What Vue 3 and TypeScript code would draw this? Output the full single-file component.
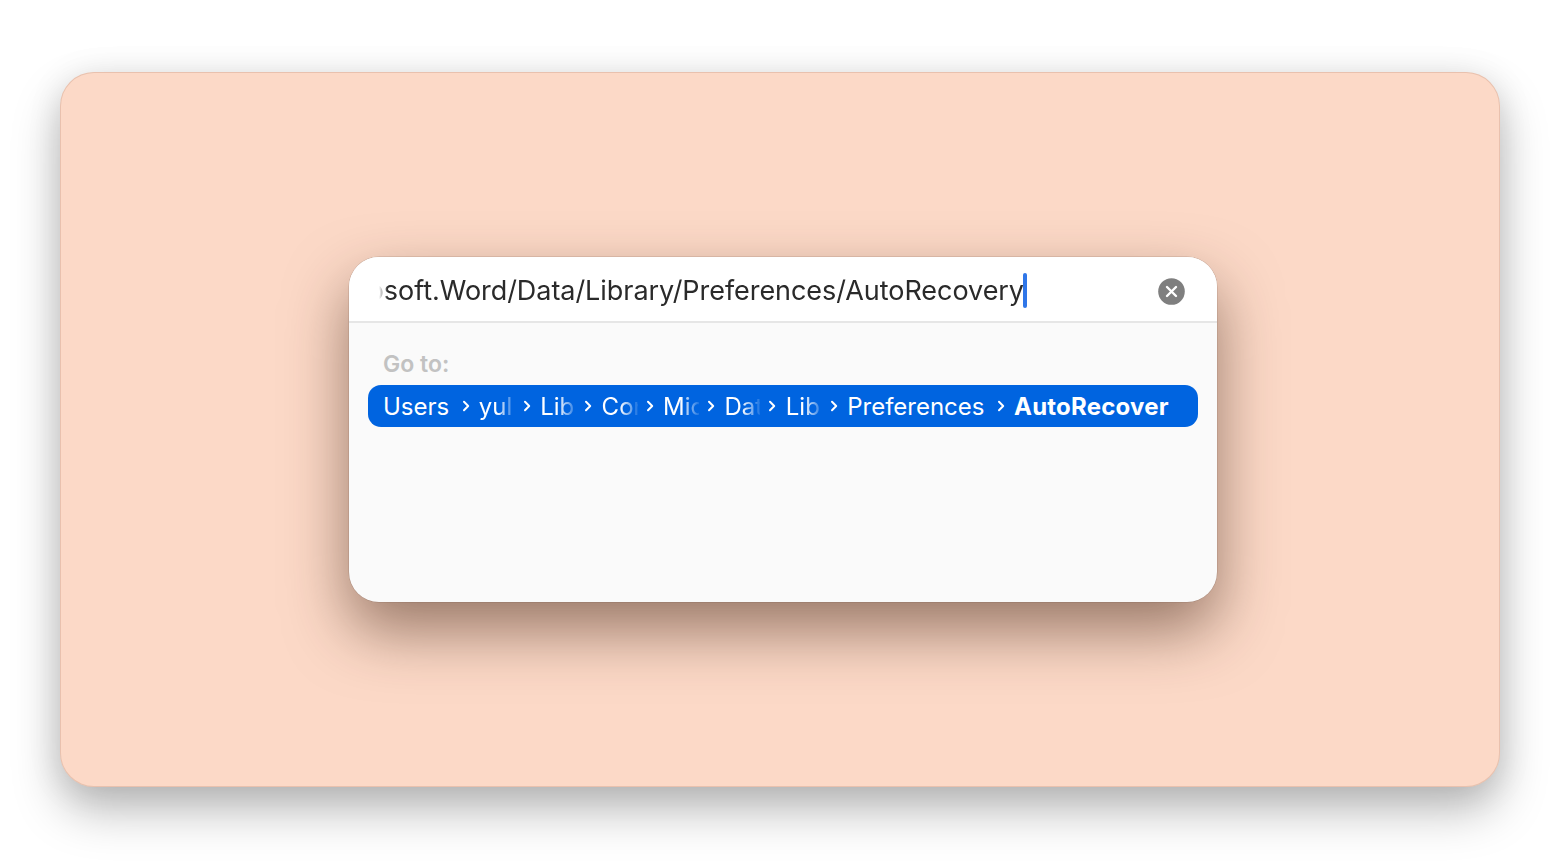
<script setup lang="ts">
interface Crumb { label: string; kind: 'full' | 'fade' | 'last' }
const crumbs: Crumb[] = [
  { label: 'Users', kind: 'full' },
  { label: 'yul', kind: 'fade' },
  { label: 'Lib', kind: 'fade' },
  { label: 'Con', kind: 'fade' },
  { label: 'Mic', kind: 'fade' },
  { label: 'Dat', kind: 'fade' },
  { label: 'Lib', kind: 'fade' },
  { label: 'Preferences', kind: 'full' },
  { label: 'AutoRecover', kind: 'last' },
]
</script>

<template>
  <main class="page">
    <section class="card">
      <div class="dialog">
        <header class="head">
          <div class="field">
            <span class="path">Microsoft.Word/Data/Library/Preferences/AutoRecovery</span>
          </div>
          <i class="caret"></i>
          <button class="clear" type="button" aria-label="Clear">
            <svg viewBox="0 0 27 27" width="27" height="27">
              <circle cx="13.5" cy="13.5" r="13.3" fill="#7f7f7f" />
              <path d="M9 9 18 18M18 9 9 18" stroke="#fff" stroke-width="2.4" stroke-linecap="round" fill="none" />
            </svg>
          </button>
        </header>
        <div class="body">
          <div class="goto">Go to:</div>
          <div class="row">
            <template v-for="(c, i) in crumbs" :key="i">
              <span class="crumb" :class="c.kind">{{ c.label }}</span>
              <svg v-if="i < crumbs.length - 1" class="chev" :class="{ wide: c.kind === 'full' }" viewBox="0 0 8 12" width="8" height="12">
                <path d="M2 1.8 6.2 6 2 10.2" stroke="#fff" stroke-width="2" stroke-linecap="round" stroke-linejoin="round" fill="none" />
              </svg>
            </template>
          </div>
        </div>
      </div>
    </section>
  </main>
</template>

<style>
html, body { margin: 0; background: #fff; }
</style>

<style scoped>
.page {
  width: 1560px;
  height: 868px;
  box-sizing: border-box;
  padding: 72px 60px 81px 60px;
  overflow: hidden;
  background: #fff;
  font-family: Inter, "Liberation Sans", sans-serif;
}
.card {
  height: 715px;
  box-sizing: border-box;
  padding: 185px 283px 185px 289px;
  border-radius: 34px;
  background: #fcd9c7;
  box-shadow: inset 0 0 0 1px rgba(190, 140, 115, 0.3), 0 24px 48px rgba(0, 0, 0, 0.26), 0 4px 34px rgba(0, 0, 0, 0.1);
}
.dialog {
  height: 345px;
  border-radius: 30px;
  overflow: hidden;
  background: #fafafa;
  box-shadow: 0 0 0 0.5px rgba(110, 80, 65, 0.3), 0 28px 62px rgba(60, 30, 15, 0.52);
  display: flex;
  flex-direction: column;
}
.head {
  height: 66px;
  flex: none;
  box-sizing: border-box;
  background: #fff;
  border-bottom: 2px solid #e6e6e6;
  display: flex;
  align-items: center;
  padding: 3px 32px 0 30px;
}
.field {
  width: 645px;
  flex: none;
  overflow: hidden;
  display: flex;
  justify-content: flex-end;
  -webkit-mask-image: linear-gradient(90deg, transparent 0, #000 9px);
  mask-image: linear-gradient(90deg, transparent 0, #000 9px);
}
.path {
  flex: none;
  white-space: nowrap;
  font-size: 27px;
  line-height: 38px;
  color: #2a2a2a;
  letter-spacing: -0.05px;
}
.caret {
  width: 3.5px;
  height: 35px;
  margin-left: -1px;
  border-radius: 2px;
  background: #2f76e8;
  flex: none;
}
.clear {
  margin: 2px 0 0 auto;
  padding: 0;
  border: 0;
  background: none;
  width: 27px;
  height: 27px;
  display: block;
}
.clear svg { display: block; }
.body {
  flex: 1;
  padding: 26px 19px 0;
}
.goto {
  padding-left: 15px;
  font-size: 23px;
  font-weight: 600;
  line-height: 30px;
  color: #c2c2c2;
}
.row {
  margin-top: 6px;
  height: 42px;
  box-sizing: border-box;
  padding: 0 15px;
  border-radius: 13px;
  background: #0064e0;
  color: #fff;
  display: flex;
  align-items: center;
  white-space: nowrap;
  font-size: 24px;
}
.crumb { flex: none; }
.crumb.fade {
  width: 36px;
  overflow: hidden;
  -webkit-mask-image: linear-gradient(90deg, #000 50%, rgba(0, 0, 0, 0.1) 100%);
  mask-image: linear-gradient(90deg, #000 50%, rgba(0, 0, 0, 0.1) 100%);
}
.crumb.last { font-weight: 700; letter-spacing: 0.2px; }
.chev {
  flex: none;
  margin: 0 9.4px 0 8px;
}
.chev.wide { margin: 0 8.6px 0 13px; }
</style>
